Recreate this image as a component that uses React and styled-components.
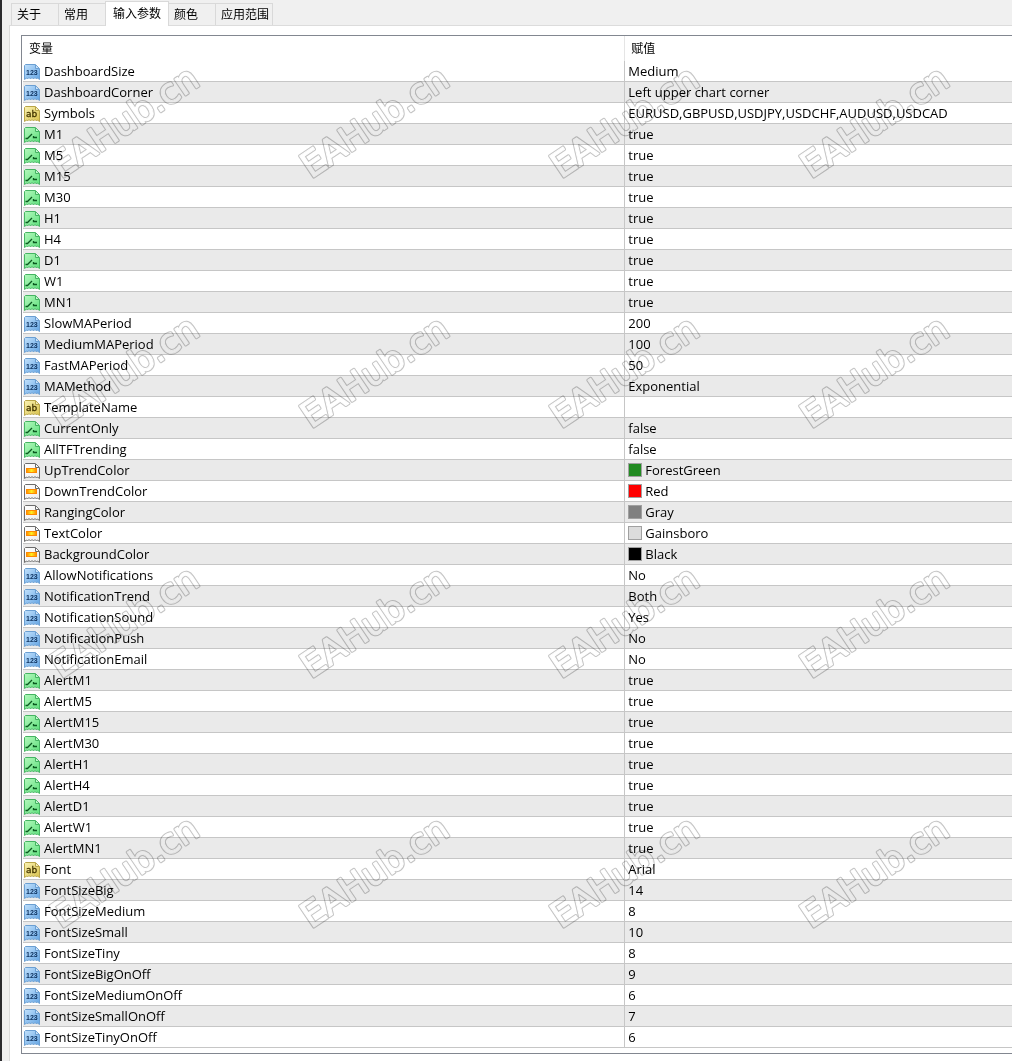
import { useState } from "react";
import styled, { createGlobalStyle } from "styled-components";

const GlobalStyle = createGlobalStyle`
  body {
    margin: 0;
    background: #f0f0f0;
    color: #000;
    font-family: "Open Sans", "Noto Sans CJK SC", sans-serif;
    font-size: 12px;
  }
`;

const Window = styled.div`
  position: relative;
  min-height: 100vh;
  box-sizing: border-box;
  padding: 1px 0 0 7px;
  border-left: 2px solid #2b2b2e;
  background: #f0f0f0;
  overflow: hidden;
  display: flex;
  flex-direction: column;
`;

const TabBar = styled.div`
  display: flex;
  align-items: flex-end;
  height: 24px;
  padding-left: 2px;
`;

const Tab = styled.button`
  box-sizing: border-box;
  height: ${({ $active }) => ($active ? "25px" : "22px")};
  margin: ${({ $active }) => ($active ? "0 0 -1px -1px" : "0")};
  padding: ${({ $active, $wide }) => ($active ? "0 7px 2px" : $wide ? "0 3px 2px 5px" : "0 17px 2px 5px")};
  border: 1px solid #d9d9d9;
  border-bottom: 0;
  border-left-width: ${({ $joined }) => ($joined ? "0" : "1px")};
  background: ${({ $active }) => ($active ? "#fff" : "#f0f0f0")};
  color: #000;
  font-family: "Noto Sans CJK SC", sans-serif;
  font-size: 12px;
  line-height: 20px;
  white-space: nowrap;
  position: relative;
`;

const Page = styled.main`
  flex: 1;
  padding: 9px 0 7px 11px;
  border: 1px solid #dcdcdc;
  border-width: 1px 0 0 1px;
  background: #fff;
`;

const ListFrame = styled.div`
  padding: 0 0 5px 1px;
  border: 1px solid #828790;
  border-right: 0;
`;

const Grid = styled.table`
  width: 100%;
  border-collapse: separate;
  border-spacing: 0;
  table-layout: fixed;
`;

const NameCol = styled.col`
  width: 60.8%;
`;

const Head = styled.th`
  height: 25px;
  box-sizing: border-box;
  padding: 0 6px 2px;
  border-left: ${({ $divided }) => ($divided ? "1px solid #e5e5e5" : "0")};
  font-family: "Noto Sans CJK SC", sans-serif;
  font-weight: normal;
  line-height: 22px;
  text-align: left;
`;

const Row = styled.tr`
  &:nth-child(even) {
    background: #eaeaea;
  }
`;

const Cell = styled.td`
  height: 21px;
  box-sizing: border-box;
  padding: 0 0 0 ${({ $value }) => ($value ? "3px" : "1px")};
  border-bottom: 1px solid #c6c6c6;
  border-left: ${({ $value }) => ($value ? "1px solid #c6c6c6" : "0")};
  font-size: 13px;
  line-height: 20px;
  white-space: nowrap;
`;

const Entry = styled.div`
  display: flex;
  align-items: center;
  height: 20px;
  gap: ${({ $gap }) => $gap || "4px"};

  svg {
    flex: none;
    margin-top: 2px;
  }
`;

const Swatch = styled.span`
  box-sizing: border-box;
  width: 14px;
  height: 14px;
  border: 1px solid #a0a0a0;
  background: ${({ color }) => color};
`;

const Watermark = styled.svg`
  position: absolute;
  top: 0;
  left: -2px;
  width: calc(100% + 2px);
  height: 100%;
  mix-blend-mode: multiply;
  pointer-events: none;
`;

const tones = {
  num: { from: "#c2e1fc", to: "#64a5e4", line: "#6b9fd2" },
  str: { from: "#fbf3b4", to: "#d9c24c", line: "#b8a548" },
  bool: { from: "#b4f8bd", to: "#5ee07c", line: "#45b462" },
  color: { from: "#ffffff", to: "#ececec", line: "#6c6c6c" }
};

const TypeIcon = ({ type }) => {
  const { line } = tones[type];
  return (
    <svg width="16" height="16" viewBox="0 0 16 16" aria-hidden="true">
      <path
        d="M.5 1.500l1-1H11.500l4 4v11l-2-1.500-1 1-1.500-1.500-1.500 1.500-1.500-1.500-1.500 1.500-1.500-1.500-1.500 1.500-1-1-2 1.500z"
        fill={`url(#fill-${type})`}
        stroke={line}
      />
      <path d="M11.500 1v3.500H15" fill="#fff" fillOpacity=".5" stroke={line} />
      {type === "num" && (
        <text x="2" y="11" fontFamily="Liberation Sans" fontWeight="bold" fontSize="7" fill="#0b2f5c">
          123
        </text>
      )}
      {type === "str" && (
        <text x="2" y="11" fontFamily="DejaVu Sans" fontSize="9" fill="#443600" stroke="#443600" strokeWidth=".3">
          ab
        </text>
      )}
      {type === "bool" && (
        <path d="M1.500 11.500H3.500L8 7M9.500 9v1.500H13" fill="none" stroke="#0b5a20" strokeWidth="1.300" />
      )}
      {type === "color" && <rect x="2.500" y="5.500" width="10" height="4" fill="url(#spectrum)" stroke="#ff8a00" />}
    </svg>
  );
};

const IconFills = () => (
  <defs>
    {Object.keys(tones).map(type => (
      <linearGradient id={`fill-${type}`} key={type} x1="0" y1="0" x2="1" y2="1">
        <stop offset="0" stopColor={tones[type].from} />
        <stop offset="1" stopColor={tones[type].to} />
      </linearGradient>
    ))}
    <linearGradient id="spectrum">
      <stop offset="0" stopColor="#ff8a00" />
      <stop offset=".5" stopColor="#ffee20" />
      <stop offset="1" stopColor="#ff8a00" />
    </linearGradient>
  </defs>
);

const mark = {
  transform: "translate(61 179) rotate(-34)",
  fontFamily: "DejaVu Sans",
  fontSize: 35,
  strokeLinejoin: "round"
};

const Stamp = () => (
  <Watermark aria-hidden="true">
    <IconFills />
    <defs>
      {/* only the rim around the thickened letters is kept */}
      <mask id="rim" maskUnits="userSpaceOnUse" x="0" y="0" width="250" height="250">
        <text {...mark} fill="#fff" stroke="#fff" strokeWidth="3">
          EAHub.cn
        </text>
        <text {...mark} fill="#000" stroke="#000" strokeWidth="1">
          EAHub.cn
        </text>
      </mask>
      <pattern id="stamp" width="250" height="250" patternUnits="userSpaceOnUse">
        <rect width="250" height="250" fill="#c4c4c4" mask="url(#rim)" />
      </pattern>
    </defs>
    <rect width="100%" height="100%" fill="url(#stamp)" />
  </Watermark>
);

const tabs = ["关于", "常用", "输入参数", "颜色", "应用范围"];

const inputs = [
  ["num", "DashboardSize", "Medium"],
  ["num", "DashboardCorner", "Left upper chart corner"],
  ["str", "Symbols", "EURUSD,GBPUSD,USDJPY,USDCHF,AUDUSD,USDCAD"],
  ["bool", "M1", "true"],
  ["bool", "M5", "true"],
  ["bool", "M15", "true"],
  ["bool", "M30", "true"],
  ["bool", "H1", "true"],
  ["bool", "H4", "true"],
  ["bool", "D1", "true"],
  ["bool", "W1", "true"],
  ["bool", "MN1", "true"],
  ["num", "SlowMAPeriod", "200"],
  ["num", "MediumMAPeriod", "100"],
  ["num", "FastMAPeriod", "50"],
  ["num", "MAMethod", "Exponential"],
  ["str", "TemplateName", ""],
  ["bool", "CurrentOnly", "false"],
  ["bool", "AllTFTrending", "false"],
  ["color", "UpTrendColor", "ForestGreen"],
  ["color", "DownTrendColor", "Red"],
  ["color", "RangingColor", "Gray"],
  ["color", "TextColor", "Gainsboro"],
  ["color", "BackgroundColor", "Black"],
  ["num", "AllowNotifications", "No"],
  ["num", "NotificationTrend", "Both"],
  ["num", "NotificationSound", "Yes"],
  ["num", "NotificationPush", "No"],
  ["num", "NotificationEmail", "No"],
  ["bool", "AlertM1", "true"],
  ["bool", "AlertM5", "true"],
  ["bool", "AlertM15", "true"],
  ["bool", "AlertM30", "true"],
  ["bool", "AlertH1", "true"],
  ["bool", "AlertH4", "true"],
  ["bool", "AlertD1", "true"],
  ["bool", "AlertW1", "true"],
  ["bool", "AlertMN1", "true"],
  ["str", "Font", "Arial"],
  ["num", "FontSizeBig", "14"],
  ["num", "FontSizeMedium", "8"],
  ["num", "FontSizeSmall", "10"],
  ["num", "FontSizeTiny", "8"],
  ["num", "FontSizeBigOnOff", "9"],
  ["num", "FontSizeMediumOnOff", "6"],
  ["num", "FontSizeSmallOnOff", "7"],
  ["num", "FontSizeTinyOnOff", "6"]
];

const InputRow = ({ type, name, value }) => (
  <Row>
    <Cell>
      <Entry>
        <TypeIcon type={type} />
        {name}
      </Entry>
    </Cell>
    <Cell $value>
      <Entry $gap="3px">
        {type === "color" && <Swatch color={value.toLowerCase()} />}
        {value}
      </Entry>
    </Cell>
  </Row>
);

const App = () => {
  const [active, setActive] = useState(2);

  return (
    <>
      <GlobalStyle />
      <Window>
        <TabBar role="tablist">
          {tabs.map((label, i) => (
            <Tab
              key={label}
              role="tab"
              aria-selected={i === active}
              $active={i === active}
              $wide={label.length > 2}
              $joined={i > 0 && i !== active}
              onClick={() => setActive(i)}
            >
              {label}
            </Tab>
          ))}
        </TabBar>
        <Page>
          <ListFrame>
            <Grid>
              <colgroup>
                <NameCol />
                <col />
              </colgroup>
              <thead>
                <tr>
                  <Head>变量</Head>
                  <Head $divided>赋值</Head>
                </tr>
              </thead>
              <tbody>
                {inputs.map(([type, name, value]) => (
                  <InputRow key={name} type={type} name={name} value={value} />
                ))}
              </tbody>
            </Grid>
          </ListFrame>
        </Page>
        <Stamp />
      </Window>
    </>
  );
};

export default App;
